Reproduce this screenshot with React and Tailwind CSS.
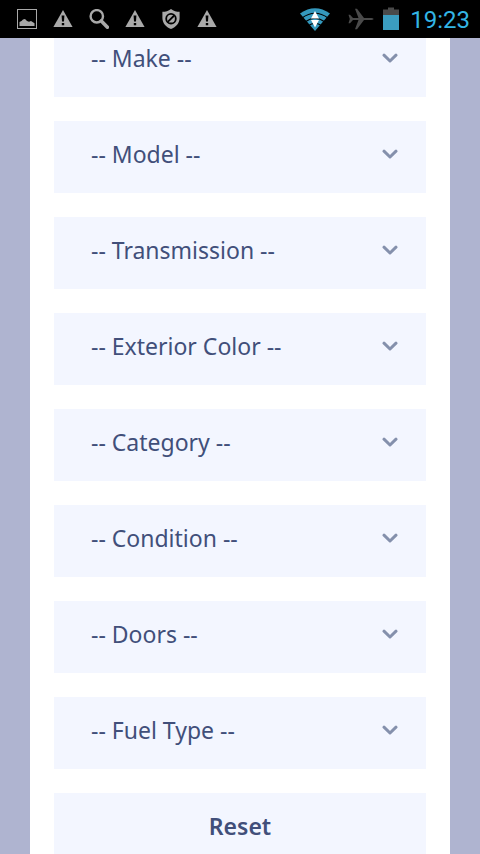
import React from "react";

const fields = [
  { id: "make", label: "Make" },
  { id: "model", label: "Model" },
  { id: "transmission", label: "Transmission" },
  { id: "exterior-color", label: "Exterior Color" },
  { id: "category", label: "Category" },
  { id: "condition", label: "Condition" },
  { id: "doors", label: "Doors" },
  { id: "fuel-type", label: "Fuel Type" },
];

const WarningIcon = () => (
  <svg className="w-5 h-5" viewBox="0 0 20 20" fill="none">
    <path d="M10 1 L19.6 18 H0.4 Z" fill="#a9a9a9" />
    <path d="M8.6 6.5 H11.4 L11 12.5 H9 Z M8.8 14 H11.2 V16.2 H8.8 Z" fill="#000" />
  </svg>
);

const StatusBar = () => (
  <header className="relative z-10 flex shrink-0 items-center justify-between h-[38px] pl-[17px] pr-[10px] bg-black">
    <div className="flex items-center gap-4">
      <svg className="w-5 h-5" viewBox="0 0 20 20" fill="none">
        <rect x="0.5" y="0.5" width="19" height="19" stroke="#a9a9a9" />
        <path
          d="M2.5 17 V13 L4.5 12 L6 10.5 L8 10 L10 12 L12 12.8 L14 12 L17.5 14.2 V17 Z"
          fill="#a9a9a9"
        />
      </svg>
      <WarningIcon />
      <svg className="w-5 h-5" viewBox="0 0 20 20" fill="none" stroke="#a9a9a9">
        <circle cx="7.8" cy="7.3" r="6.2" strokeWidth="2.4" />
        <path d="M12.3 12 L18.4 18.2" strokeWidth="3.6" strokeLinecap="round" />
      </svg>
      <WarningIcon />
      <svg className="w-5 h-5" viewBox="0 0 20 20" fill="none">
        <path
          d="M10 0 C12.5 2 15.5 2.8 18.6 2.8 V9 C18.6 14 15 18 10 20 C5 18 1.4 14 1.4 9 V2.8 C4.5 2.8 7.5 2 10 0 Z"
          fill="#a9a9a9"
        />
        <circle cx="10" cy="9.7" r="4.8" stroke="#000" strokeWidth="1.8" />
        <path d="M6.8 12.9 L13.2 6.5" stroke="#000" strokeWidth="1.8" />
      </svg>
      <WarningIcon />
    </div>

    <div className="flex items-center">
      <svg className="w-[30px] h-[23px]" viewBox="0 0 30 23" fill="none">
        <path d="M0 5.5 Q15 -5 30 5.5 L15 23 Z" fill="#3498bd" />
        <path
          d="M2 10 Q15 0.5 28 10 M5 14 Q15 6.5 25 14 M8 18 Q15 12.5 22 18"
          stroke="#000"
          strokeWidth="1.1"
        />
        <path d="M15 3 L19 10.5 H11 Z M11 12 H19 L15 19.5 Z" fill="#fff" />
      </svg>
      <svg className="w-[26px] h-[22px] ml-[18px]" viewBox="0 0 26 22">
        <path
          d="M25.5 11 C25.5 10.2 24 10 22 10 H16 L9 0.8 H7 L10.5 10 H5 L2 6.8 H0.5 L1.8 11 L0.5 15.2 H2 L5 12 H10.5 L7 21.2 H9 L16 12 H22 C24 12 25.5 11.8 25.5 11 Z"
          fill="#4a4a4a"
        />
      </svg>
      <svg className="w-4 h-6 ml-[9px]" viewBox="0 0 16 24">
        <path d="M5 0.5 H11 V2.5 H16 V8 H0 V2.5 H5 Z" fill="#4a4a4a" />
        <rect y="8" width="16" height="15" fill="#3b9dc0" />
      </svg>
      <span className="ml-[11px] pt-[2px] font-[Roboto,sans-serif] text-[24px] leading-8 text-[#33b5e5]">
        19:23
      </span>
    </div>
  </header>
);

const SelectField = ({ id, label }) => (
  <div className="relative">
    <select
      id={id}
      aria-label={label}
      className="block w-full h-[72px] pl-[37px] pr-16 pb-[6px] appearance-none rounded-none bg-[#f3f6ff] text-[23px] text-[#414f7a]"
    >
      <option>-- {label} --</option>
    </select>
    <svg
      className="absolute right-7 top-7 w-4 h-[10px] pointer-events-none"
      viewBox="0 0 16 10"
      fill="none"
    >
      <path
        d="M2 2.2 L8 8 L14 2.2"
        stroke="#8490ac"
        strokeWidth="3"
        strokeLinecap="round"
        strokeLinejoin="round"
      />
    </svg>
  </div>
);

const App = () => {
  return (
    <div className="flex flex-col h-screen overflow-hidden bg-[#afb4d0] font-['Noto_Sans',sans-serif]">
      <StatusBar />
      <main className="flex-1 min-h-0 mx-[30px] px-6 overflow-hidden bg-white">
        {/* the form is scrolled slightly under the status bar */}
        <form className="flex flex-col gap-6 -mt-[13px]">
          {fields.map((field) => (
            <SelectField key={field.id} id={field.id} label={field.label} />
          ))}
          <button
            type="reset"
            className="w-full h-[72px] pb-[6px] rounded-none bg-[#f3f6ff] text-[23px] font-semibold text-[#414f7a]"
          >
            Reset
          </button>
        </form>
      </main>
    </div>
  );
};

export default App;
